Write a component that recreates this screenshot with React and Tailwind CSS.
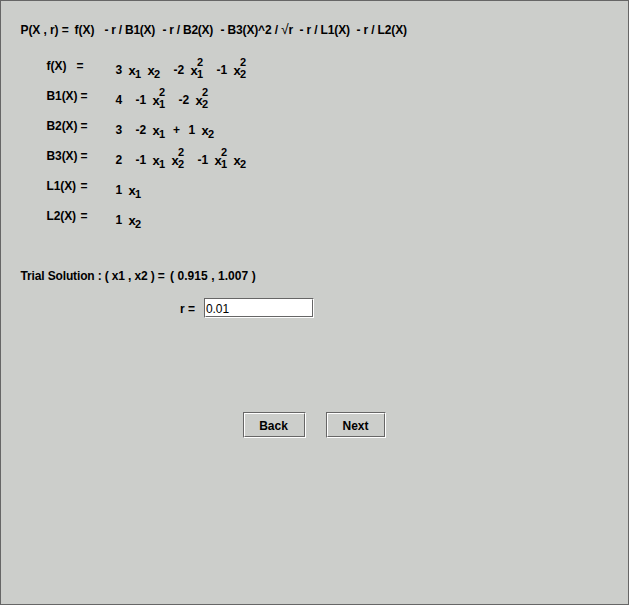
import React from "react";

const header = [
  { text: "P(X , r) =", box: "w-[54px]", fit: "tracking-[-0.08px]" },
  { text: "f(X)", box: "w-[30px]", fit: "tracking-[0px]" },
  { text: "- r / B1(X)", box: "w-[58px]", fit: "tracking-[-0.25px]" },
  { text: "- r / B2(X)", box: "w-[58px]", fit: "tracking-[-0.25px]" },
  { text: "- B3(X)^2 / ", root: "r", box: "w-[79px]", fit: "tracking-[-0.15px]" },
  { text: "- r / L1(X)", box: "w-[57px]", fit: "tracking-[-0.15px]" },
  { text: "- r / L2(X)", box: "w-[57px]", fit: "tracking-[-0.15px]" },
];

// Each term is a leading number (n), a signed coefficient (c),
// a plus sign or a variable written as [subscript, superscript].
const rows = [
  { label: "f(X)", wide: true, terms: [{ n: "3" }, { v: ["1"] }, { v: ["2"] }, { c: "-2" }, { v: ["1", "2"] }, { c: "-1" }, { v: ["2", "2"] }] },
  { label: "B1(X)", terms: [{ n: "4" }, { c: "-1" }, { v: ["1", "2"] }, { c: "-2" }, { v: ["2", "2"] }] },
  { label: "B2(X)", terms: [{ n: "3" }, { c: "-2" }, { v: ["1"] }, { plus: true }, { n: "1" }, { v: ["2"] }] },
  { label: "B3(X)", terms: [{ n: "2" }, { c: "-1" }, { v: ["1"] }, { v: ["2", "2"] }, { c: "-1" }, { v: ["1", "2"] }, { v: ["2"] }] },
  { label: "L1(X)", terms: [{ n: "1" }, { v: ["1"] }] },
  { label: "L2(X)", terms: [{ n: "1" }, { v: ["2"] }] },
];

function Term({ term }) {
  if (term.n) return <span className="w-[13px] shrink-0">{term.n}</span>;
  if (term.c) return <span className="ml-[7px] w-[17px] shrink-0">{term.c}</span>;
  if (term.plus) return <span className="ml-[1.5px] w-[15.5px] shrink-0">+</span>;
  const [sub, sup] = term.v;
  return (
    <span className="flex w-[19px] shrink-0">
      <span className="w-[6.5px] pt-px text-[13px]">x</span>
      <span className="-mt-[6px] flex flex-col text-[11px] leading-[11px]">
        <span className="h-[12px]">{sup}</span>
        <span>{sub}</span>
      </span>
    </span>
  );
}

function Etched({ className, children }) {
  return (
    <div className={`border border-t-[#666666] border-l-[#666666] border-r-white border-b-white ${className}`}>
      <div className="flex h-full w-full items-center border border-t-white border-l-white border-r-[#666666] border-b-[#666666]">
        {children}
      </div>
    </div>
  );
}

export default function App() {
  return (
    <main className="h-[605px] w-[629px] overflow-hidden border border-[#666666] bg-[#cccecb] font-['Liberation_Sans',Arial,sans-serif] text-[12px] leading-[14px] font-bold text-black">
      <div className="flex h-[36px] pt-[22px] pl-[19.5px] whitespace-pre">
        {header.map((part) => (
          <span key={part.text} className={`${part.box} ${part.fit} shrink-0`}>
            {part.text}
            {part.root && (
              <>
                <span className="text-[14px] leading-[0] font-normal">√</span>
                {part.root}
              </>
            )}
          </span>
        ))}
      </div>
      <div className="mt-[22px] pl-[45.5px]">
        {rows.map((row) => (
          <div key={row.label} className="flex h-[30px] whitespace-nowrap">
            <div className="flex w-[69px] shrink-0">
              <span className={row.wide ? "w-[30px] tracking-[0px]" : "w-[34px] tracking-[-0.1px]"}>{row.label}</span>
              <span>=</span>
            </div>
            <div className="flex pt-[4px]">
              {row.terms.map((term, i) => (
                <Term key={i} term={term} />
              ))}
            </div>
          </div>
        ))}
      </div>
      <div className="mt-[30px] flex pl-[19.5px] whitespace-nowrap">
        <span className="w-[149.5px] tracking-[-0.14px]">Trial Solution : ( x1 , x2 ) =</span>
        <span className="tracking-[0.06px]">( 0.915 , 1.007 )</span>
      </div>
      <div className="mt-[15px] flex items-center pl-[179px]">
        <label htmlFor="r" className="w-[24px] pt-px whitespace-nowrap">r =</label>
        <Etched className="h-[20px] w-[110px]">
          <input id="r" defaultValue="0.01" className="h-full w-full bg-white pt-[2px] font-normal tracking-[-0.1px] outline-none" />
        </Etched>
      </div>
      <div className="mt-[94px] flex gap-[20px] pl-[242px]">
        <Etched className="h-[26px] w-[63px]">
          <button className="w-full pt-px pr-[2px]">Back</button>
        </Etched>
        <Etched className="h-[26px] w-[60px]">
          <button className="w-full pt-px pr-px">Next</button>
        </Etched>
      </div>
    </main>
  );
}
